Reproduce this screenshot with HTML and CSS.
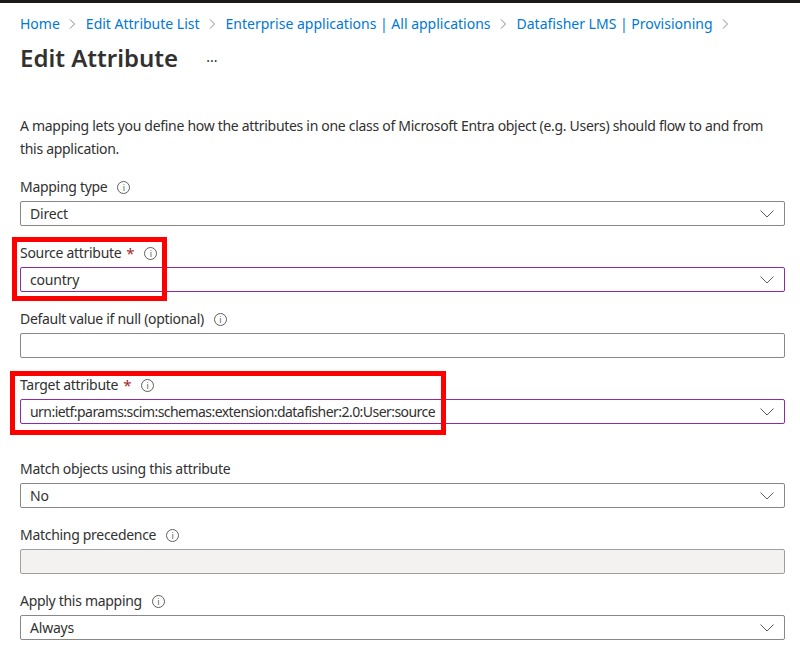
FILE: index.html
```html
<!DOCTYPE html>
<html lang="en">
<head>
<meta charset="utf-8">
<title>Edit Attribute</title>
<link rel="stylesheet" href="styles.css">
</head>
<body>
<div class="topbar"></div>
<main class="page">
  <nav class="crumbs">
    <a class="crumb">Home</a><span class="sep"><svg width="7" height="12" viewBox="0 0 7 12"><path d="M1 1.5 L5.5 6 L1 10.5" fill="none" stroke="#8a8886" stroke-width="1"/></svg></span>
    <a class="crumb">Edit Attribute List</a><span class="sep"><svg width="7" height="12" viewBox="0 0 7 12"><path d="M1 1.5 L5.5 6 L1 10.5" fill="none" stroke="#8a8886" stroke-width="1"/></svg></span>
    <a class="crumb">Enterprise applications | All applications</a><span class="sep"><svg width="7" height="12" viewBox="0 0 7 12"><path d="M1 1.5 L5.5 6 L1 10.5" fill="none" stroke="#8a8886" stroke-width="1"/></svg></span>
    <a class="crumb">Datafisher LMS | Provisioning</a><span class="sep"><svg width="7" height="12" viewBox="0 0 7 12"><path d="M1 1.5 L5.5 6 L1 10.5" fill="none" stroke="#8a8886" stroke-width="1"/></svg></span>
  </nav>
  <div class="titlerow">
    <h1 class="title">Edit Attribute</h1>
    <span class="more">···</span>
  </div>
  <p class="desc">A mapping lets you define how the attributes in one class of Microsoft Entra object (e.g. Users) should flow to and from this application.</p>

  <div class="field">
    <div class="label">Mapping type <span class="info">i</span></div>
    <div class="box select"><span class="val">Direct</span><svg class="chev" width="14" height="8" viewBox="0 0 14 8"><path d="M0.5 0.5 L7 7 L13.5 0.5" fill="none" stroke="#605e5c" stroke-width="1"/></svg></div>
  </div>

  <div class="field">
    <div class="label">Source attribute <span class="req">*</span> <span class="info">i</span></div>
    <div class="box select focus"><span class="val">country</span><svg class="chev" width="14" height="8" viewBox="0 0 14 8"><path d="M0.5 0.5 L7 7 L13.5 0.5" fill="none" stroke="#605e5c" stroke-width="1"/></svg></div>
    <div class="mark mark-source"></div>
  </div>

  <div class="field">
    <div class="label">Default value if null (optional) <span class="info">i</span></div>
    <div class="box"></div>
  </div>

  <div class="field">
    <div class="label">Target attribute <span class="req">*</span> <span class="info">i</span></div>
    <div class="box select focus"><span class="val urn">urn:ietf:params:scim:schemas:extension:datafisher:2.0:User:source</span><svg class="chev" width="14" height="8" viewBox="0 0 14 8"><path d="M0.5 0.5 L7 7 L13.5 0.5" fill="none" stroke="#605e5c" stroke-width="1"/></svg></div>
    <div class="mark mark-target"></div>
  </div>

  <div class="field spaced">
    <div class="label">Match objects using this attribute</div>
    <div class="box select"><span class="val">No</span><svg class="chev" width="14" height="8" viewBox="0 0 14 8"><path d="M0.5 0.5 L7 7 L13.5 0.5" fill="none" stroke="#605e5c" stroke-width="1"/></svg></div>
  </div>

  <div class="field">
    <div class="label">Matching precedence <span class="info">i</span></div>
    <div class="box disabled"></div>
  </div>

  <div class="field">
    <div class="label">Apply this mapping <span class="info">i</span></div>
    <div class="box select"><span class="val">Always</span><svg class="chev" width="14" height="8" viewBox="0 0 14 8"><path d="M0.5 0.5 L7 7 L13.5 0.5" fill="none" stroke="#605e5c" stroke-width="1"/></svg></div>
  </div>
</main>
</body>
</html>
```

FILE: styles.css
```css
* { box-sizing: border-box; }
html, body {
  margin: 0;
  padding: 0;
  background: #ffffff;
}
body {
  font-family: "Noto Sans", "Open Sans", sans-serif;
  font-size: 14px;
  color: #323130;
  overflow: hidden;
}
.topbar {
  height: 3px;
  background: #1b1a19;
}
.page {
  padding: 0 15px 0 20px;
}
.crumbs {
  display: flex;
  align-items: center;
  height: 20px;
  margin-top: 11px;
  white-space: nowrap;
  line-height: 20px;
}
.crumb {
  color: #0078d4;
}
.sep {
  display: inline-flex;
  align-items: center;
  margin: 0 10px 0 9px;
}
.titlerow {
  display: flex;
  align-items: center;
  height: 32px;
  margin-top: 8px;
}
.title {
  margin: 0;
  font-size: 24px;
  font-weight: 600;
  line-height: 32px;
  color: #323130;
}
.more {
  margin-left: 28px;
  font-size: 14px;
  color: #323130;
  padding-top: 4px;
}
.desc {
  margin: 40px 0 0 0;
  line-height: 23px;
  letter-spacing: -0.3px;
}
.field {
  position: relative;
  margin-top: 17px;
}
.field.spaced {
  margin-top: 35px;
}
.label {
  display: flex;
  align-items: center;
  height: 20px;
  line-height: 20px;
  margin-bottom: 4px;
  white-space: nowrap;
  letter-spacing: -0.3px;
}
.req {
  color: #a4262c;
  margin-left: 5px;
  font-size: 15px;
}
.info {
  display: inline-flex;
  align-items: center;
  justify-content: center;
  width: 13px;
  height: 13px;
  border: 1px solid #605e5c;
  border-radius: 50%;
  font-size: 9px;
  line-height: 1;
  letter-spacing: 0;
  color: #605e5c;
  margin-left: 10px;
}
.box {
  display: flex;
  align-items: center;
  justify-content: space-between;
  height: 25px;
  border: 1px solid #8a8886;
  border-radius: 2px;
  padding: 0 8px 0 9px;
  background: #ffffff;
  white-space: nowrap;
}
.val {
  letter-spacing: -0.2px;
}
.val.urn {
  letter-spacing: -0.55px;
}
.box.focus {
  border-color: #8a2da5;
}
.box.disabled {
  background: #f3f2f1;
  border-color: #a19f9d;
}
.chev {
  flex: none;
  margin-right: 2px;
}
.mark {
  position: absolute;
  border: 5px solid #ff0000;
  pointer-events: none;
}
.mark-source {
  left: -8px;
  top: -6px;
  width: 155px;
  height: 64px;
}
.mark-target {
  left: -10px;
  top: -4px;
  width: 436px;
  height: 64px;
}
```
